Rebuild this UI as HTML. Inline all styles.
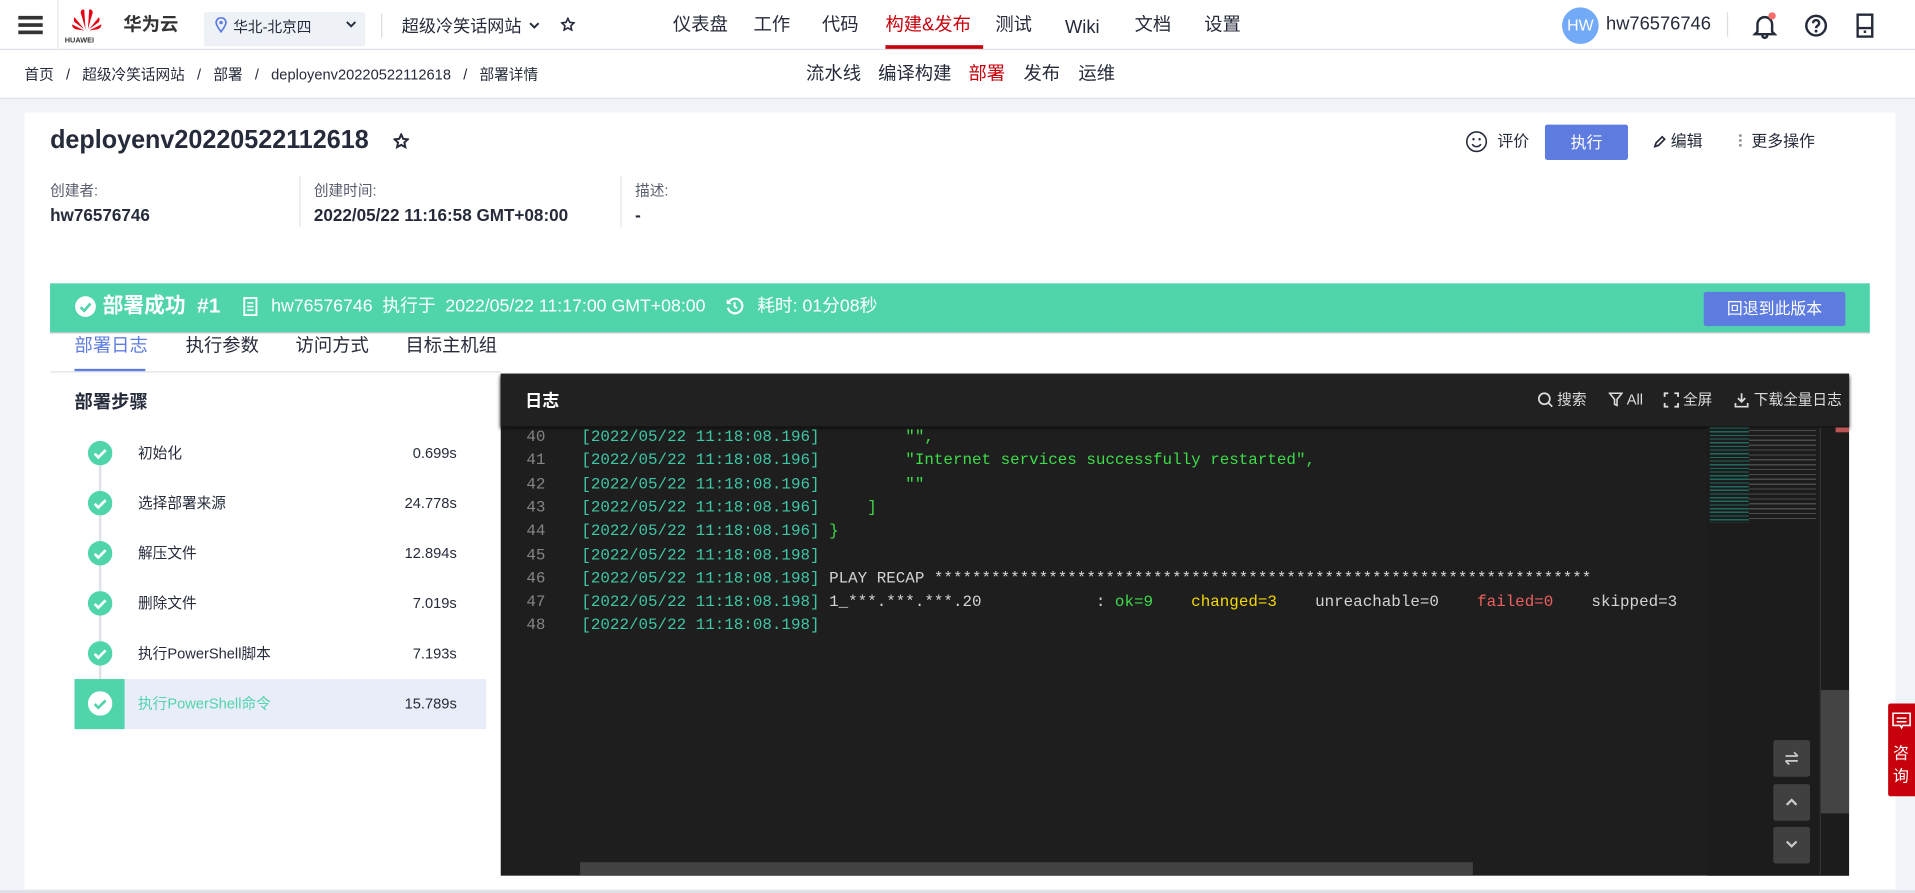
<!DOCTYPE html>
<html><head><meta charset="utf-8"><style>
html,body{margin:0;padding:0;width:1915px;height:893px;overflow:hidden;background:#f0f3f7}
#w{position:absolute;left:0;top:0;width:1568px;height:731px;transform:scale(1.22130);transform-origin:0 0;font-family:"Liberation Sans","Noto Sans CJK SC",sans-serif;color:#252b3a;font-size:13px}
.a{position:absolute;white-space:nowrap}
.n{line-height:20px;font-size:15px;top:11px}
.mono{font-family:"Liberation Mono","DejaVu Sans Mono",monospace;font-size:13px}
</style></head><body><div id="w">
<!-- header -->
<div class="a" style="left:0;top:0;width:1568px;height:40px;background:#fff;border-bottom:1px solid #dcdfe6"></div>
<div class="a" style="left:15px;top:13px;width:20px;height:3px;background:#333;box-shadow:0 6px 0 #333,0 12px 0 #333"></div>
<div class="a" style="left:47px;top:0;width:1px;height:40px;background:#e5e5e5"></div>
<svg class="a" style="left:57px;top:6px" width="28" height="22" viewBox="0 0 28 22"><g fill="#e60012"><path d="M13 18 L9 4 Q10 1 12 2 Z"/><path d="M15 18 L19 4 Q18 1 16 2 Z"/><path d="M12 18 L4 8 Q3 10 4 12 Z"/><path d="M16 18 L24 8 Q25 10 24 12 Z"/><path d="M12 19 L2 14 Q2 17 5 18 Z"/><path d="M16 19 L26 14 Q26 17 23 18 Z"/></g></svg>
<div class="a" style="left:53px;top:31px;font-size:6px;font-weight:bold;color:#333">HUAWEI</div>
<div class="a n" style="left:101px;font-weight:bold;color:#333">华为云</div>
<div class="a" style="left:167px;top:10px;width:132px;height:28px;background:#eef1f6;border-radius:2px"></div>
<svg class="a" style="left:176px;top:14px" width="10" height="13" viewBox="0 0 10 13"><path d="M5 12C2 8 1 6 1 4.5a4 4 0 018 0C9 6 8 8 5 12z" fill="none" stroke="#5e7ce0" stroke-width="1.4"/><circle cx="5" cy="4.5" r="1.4" fill="#5e7ce0"/></svg>
<div class="a" style="left:191px;top:14px;font-size:12px;line-height:16px">华北-北京四</div>
<svg class="a" style="left:283px;top:17px" width="9" height="6" viewBox="0 0 9 6"><path d="M1 1l3.5 3.5L8 1" fill="none" stroke="#252b3a" stroke-width="1.6"/></svg>
<div class="a" style="left:312px;top:11px;width:1px;height:20px;background:#ddd"></div>
<div class="a" style="left:329px;top:11px;font-size:14px;line-height:20px">超级冷笑话网站</div>
<svg class="a" style="left:433px;top:18px" width="9" height="6" viewBox="0 0 9 6"><path d="M1 1l3.5 3.5L8 1" fill="none" stroke="#252b3a" stroke-width="1.6"/></svg>
<svg class="a" style="left:459px;top:14px" width="12" height="12" viewBox="0 0 12 12"><path d="M6 1l1.5 3.3 3.5.4-2.6 2.4.7 3.5L6 8.9 2.9 10.6l.7-3.5L1 4.7l3.5-.4z" fill="none" stroke="#252b3a" stroke-width="1.3"/></svg>
<div class="a n" style="left:551px">仪表盘</div>
<div class="a n" style="left:617px">工作</div>
<div class="a n" style="left:673px">代码</div>
<div class="a n" style="left:725px;color:#c7000b">构建&amp;发布</div>
<div class="a" style="left:725px;top:37px;width:80px;height:3px;background:#c7000b"></div>
<div class="a n" style="left:815px">测试</div>
<div class="a n" style="left:872px;top:13px">Wiki</div>
<div class="a n" style="left:929px">文档</div>
<div class="a n" style="left:986px">设置</div>
<div class="a" style="left:1279px;top:6px;width:30px;height:30px;border-radius:50%;background:#73aaf7;color:#fff;font-size:13px;text-align:center;line-height:30px">HW</div>
<div class="a n" style="left:1315px;top:10px">hw76576746</div>
<div class="a" style="left:1414px;top:10px;width:1px;height:20px;background:#ddd"></div>
<svg class="a" style="left:1435px;top:10px" width="20" height="22" viewBox="0 0 20 22"><path d="M4 16V10a6 6 0 0112 0v6l2 2H2z M8 19a2 2 0 004 0" fill="none" stroke="#252b3a" stroke-width="2"/><circle cx="16" cy="3" r="3" fill="#f66f6a"/></svg>
<svg class="a" style="left:1477px;top:11px" width="20" height="20" viewBox="0 0 20 20"><circle cx="10" cy="10" r="8" fill="none" stroke="#252b3a" stroke-width="2"/><path d="M7.5 8a2.5 2.5 0 115 0c0 2-2.5 2-2.5 4" fill="none" stroke="#252b3a" stroke-width="2"/><circle cx="10" cy="14.5" r="1.2" fill="#252b3a"/></svg>
<svg class="a" style="left:1520px;top:11px" width="14" height="20" viewBox="0 0 14 20"><rect x="1" y="1" width="12" height="18" fill="none" stroke="#252b3a" stroke-width="2"/><path d="M1 12h12" stroke="#252b3a" stroke-width="2"/><rect x="6" y="14" width="2" height="2" fill="#252b3a"/></svg>
<!-- breadcrumb -->
<div class="a" style="left:0;top:41px;width:1568px;height:39px;background:#fff;border-bottom:1px solid #dcdfe6"></div>
<div class="a" style="left:20px;top:53px;font-size:12px;line-height:16px">首页 &nbsp; / &nbsp; 超级冷笑话网站 &nbsp; / &nbsp; 部署 &nbsp; / &nbsp; deployenv20220522112618 &nbsp; / &nbsp; 部署详情</div>
<div class="a n" style="left:660px;top:51px">流水线</div>
<div class="a n" style="left:719px;top:51px">编译构建</div>
<div class="a n" style="left:793px;top:51px;color:#c7000b">部署</div>
<div class="a n" style="left:838px;top:51px">发布</div>
<div class="a n" style="left:883px;top:51px">运维</div>
<!-- card -->
<div class="a" style="left:20px;top:92px;width:1532px;height:636px;background:#fff"></div>
<div class="a" style="left:0;top:729px;width:1568px;height:2px;background:#dcdfe6"></div>
<div class="a" style="left:41px;top:103px;font-size:21px;font-weight:bold;transform:scaleX(.98);transform-origin:0 0">deployenv20220522112618</div>
<svg class="a" style="left:322px;top:109px" width="13" height="13" viewBox="0 0 12 12"><path d="M6 1l1.5 3.3 3.5.4-2.6 2.4.7 3.5L6 8.9 2.9 10.6l.7-3.5L1 4.7l3.5-.4z" fill="none" stroke="#252b3a" stroke-width="1.5"/></svg>
<svg class="a" style="left:1200px;top:107px" width="18" height="18" viewBox="0 0 18 18"><circle cx="9" cy="9" r="8" fill="none" stroke="#252b3a" stroke-width="1.3"/><circle cx="6.5" cy="7" r="1" fill="#252b3a"/><circle cx="11.5" cy="7" r="1" fill="#252b3a"/><path d="M5.5 11a4 4 0 007 0" fill="none" stroke="#252b3a" stroke-width="1.3"/></svg>
<div class="a" style="left:1226px;top:108px;font-size:13px;line-height:16px">评价</div>
<div class="a" style="left:1265px;top:102px;width:68px;height:29px;background:#5e7ce0;border-radius:2px;color:#fff;font-size:13px;text-align:center;line-height:29px">执行</div>
<svg class="a" style="left:1353px;top:110px" width="12" height="12" viewBox="0 0 12 12"><path d="M2 10l1-3 5-5 2 2-5 5z" fill="none" stroke="#252b3a" stroke-width="1.4"/></svg>
<div class="a" style="left:1368px;top:108px;font-size:13px;line-height:16px">编辑</div>
<div class="a" style="left:1424px;top:110px;width:2px;height:2px;background:#888;box-shadow:0 4px 0 #888,0 8px 0 #888"></div>
<div class="a" style="left:1434px;top:108px;font-size:13px;line-height:16px">更多操作</div>
<div class="a" style="left:41px;top:147px;font-size:12px;color:#575d6c">创建者:</div>
<div class="a" style="left:41px;top:168px;font-size:14px;font-weight:bold">hw76576746</div>
<div class="a" style="left:245px;top:144px;width:1px;height:42px;background:#e5e5e5"></div>
<div class="a" style="left:257px;top:147px;font-size:12px;color:#575d6c">创建时间:</div>
<div class="a" style="left:257px;top:168px;font-size:14px;font-weight:bold">2022/05/22 11:16:58 GMT+08:00</div>
<div class="a" style="left:508px;top:144px;width:1px;height:42px;background:#e5e5e5"></div>
<div class="a" style="left:520px;top:147px;font-size:12px;color:#575d6c">描述:</div>
<div class="a" style="left:520px;top:168px;font-size:14px;font-weight:bold">-</div>
<!-- banner -->
<div class="a" style="left:41px;top:232px;width:1490px;height:40px;background:#50d4ab;border-bottom:1px solid #ccc"></div>
<svg class="a" style="left:61px;top:242px" width="18" height="18" viewBox="0 0 18 18"><circle cx="9" cy="9" r="8.5" fill="#fff"/><path d="M5 9.5l3 3 5-6" fill="none" stroke="#50d4ab" stroke-width="2.2"/></svg>
<div class="a" style="left:84px;top:241px;font-size:17px;font-weight:bold;color:#fff;line-height:20px">部署成功 &nbsp;#1</div>
<svg class="a" style="left:199px;top:243px" width="12" height="16" viewBox="0 0 12 16"><rect x="1" y="1" width="10" height="14" fill="none" stroke="#fff" stroke-width="1.5"/><path d="M3.5 5h5M3.5 8h5M3.5 11h5" stroke="#fff" stroke-width="1.3"/></svg>
<div class="a" style="left:222px;top:242px;font-size:14.5px;color:#fff;line-height:18px">hw76576746 &nbsp;执行于 &nbsp;2022/05/22 11:17:00 GMT+08:00</div>
<svg class="a" style="left:594px;top:243px" width="15" height="15" viewBox="0 0 15 15"><path d="M3 4a6 6 0 11-1 5" fill="none" stroke="#fff" stroke-width="1.8"/><path d="M1 2v4h4z" fill="#fff"/><path d="M7.5 4.5v3.5l2 1.5" fill="none" stroke="#fff" stroke-width="1.6"/></svg>
<div class="a" style="left:620px;top:242px;font-size:14.5px;color:#fff;line-height:18px">耗时: 01分08秒</div>
<div class="a" style="left:1395px;top:239px;width:116px;height:28px;background:#5e7ce0;border-radius:2px;color:#fff;font-size:13px;text-align:center;line-height:28px">回退到此版本</div>
<!-- tabs -->
<div class="a" style="left:61px;top:274px;font-size:15px;color:#5e7ce0;line-height:20px">部署日志</div>
<div class="a" style="left:61px;top:302px;width:58px;height:2px;background:#5e7ce0"></div>
<div class="a" style="left:152px;top:274px;font-size:15px;line-height:20px">执行参数</div>
<div class="a" style="left:242px;top:274px;font-size:15px;line-height:20px">访问方式</div>
<div class="a" style="left:332px;top:274px;font-size:15px;line-height:20px">目标主机组</div>
<div class="a" style="left:41px;top:304px;width:369px;height:1px;background:#dfe1e6"></div>
<!-- steps -->
<div class="a" style="left:61px;top:320px;font-size:15px;font-weight:bold;line-height:20px">部署步骤</div>
<div class="a" style="left:81px;top:371px;width:2px;height:185px;background:#dfe1e6"></div>
<div class="a" style="left:61px;top:556px;width:337px;height:41px;background:#e9edfa"></div>
<div class="a" style="left:61px;top:556px;width:41px;height:41px;background:#50d4ab"></div>
<div id="steps"></div>
<!-- log panel -->
<div class="a" style="left:410px;top:306px;width:1104px;height:411px;background:#1e1e1e"></div>
<div class="a" style="left:410px;top:306px;width:1104px;height:43px;background:#212121;box-shadow:0 2px 3px #111"></div>
<div class="a" style="left:430px;top:319px;font-size:14px;font-weight:bold;color:#fff;line-height:18px">日志</div>
<svg class="a" style="left:1259px;top:321px" width="13" height="13" viewBox="0 0 13 13"><circle cx="5.5" cy="5.5" r="4.5" fill="none" stroke="#ddd" stroke-width="1.4"/><path d="M9 9l3 3" stroke="#ddd" stroke-width="1.4"/></svg>
<div class="a" style="left:1275px;top:320px;font-size:12px;color:#ddd;line-height:15px">搜索</div>
<svg class="a" style="left:1317px;top:321px" width="12" height="12" viewBox="0 0 12 12"><path d="M1 1h10L7 6v5L5 10V6z" fill="none" stroke="#ddd" stroke-width="1.3"/></svg>
<div class="a" style="left:1332px;top:320px;font-size:12px;color:#ddd;line-height:15px">All</div>
<svg class="a" style="left:1362px;top:321px" width="13" height="13" viewBox="0 0 13 13"><path d="M1 4V1h3M9 1h3v3M12 9v3H9M4 12H1V9" fill="none" stroke="#ddd" stroke-width="1.5"/></svg>
<div class="a" style="left:1378px;top:320px;font-size:12px;color:#ddd;line-height:15px">全屏</div>
<svg class="a" style="left:1420px;top:321px" width="12" height="13" viewBox="0 0 12 13"><path d="M6 1v7M3 5l3 3 3-3M1 9v3h10V9" fill="none" stroke="#ddd" stroke-width="1.4"/></svg>
<div class="a" style="left:1436px;top:320px;font-size:12px;color:#ddd;line-height:15px">下载全量日志</div>
<div class="a" style="left:1398px;top:350px;width:116px;height:367px;background:#1c1c1c"></div>
<div class="a" style="left:1400px;top:350px;width:32px;height:78px;background:repeating-linear-gradient(#1f6a5f 0 1px,#1c1c1c 1px 3px)"></div>
<div class="a" style="left:1432px;top:352px;width:55px;height:74px;background:repeating-linear-gradient(#555 0 1px,#1c1c1c 1px 4px);opacity:.8"></div>
<div class="a" style="left:1490px;top:350px;width:1px;height:367px;background:#333"></div>
<div class="a" style="left:1491px;top:565px;width:23px;height:101px;background:#444"></div>
<div class="a" style="left:1503px;top:350px;width:11px;height:4px;background:#b55"></div>
<div class="a" style="left:475px;top:706px;width:731px;height:11px;background:#424242"></div>
<div class="a" style="left:1452px;top:606px;width:30px;height:30px;background:#404040;border-radius:2px"></div>
<svg class="a" style="left:1461px;top:615px" width="12" height="12" viewBox="0 0 12 12"><path d="M1 4h10M8 1l3 3M11 8H1M4 11L1 8" fill="none" stroke="#ccc" stroke-width="1.4"/></svg>
<div class="a" style="left:1452px;top:642px;width:30px;height:30px;background:#404040;border-radius:2px"></div>
<svg class="a" style="left:1462px;top:653px" width="10" height="7" viewBox="0 0 10 7"><path d="M1 6l4-4 4 4" fill="none" stroke="#ccc" stroke-width="1.8"/></svg>
<div class="a" style="left:1452px;top:677px;width:30px;height:30px;background:#404040;border-radius:2px"></div>
<svg class="a" style="left:1462px;top:688px" width="10" height="7" viewBox="0 0 10 7"><path d="M1 1l4 4 4-4" fill="none" stroke="#ccc" stroke-width="1.8"/></svg>
<div id="log" class="mono"></div>
<!-- consult -->
<div class="a" style="left:1546px;top:576px;width:22px;height:76px;background:#c7000b;border-radius:2px 0 0 2px"></div>
<svg class="a" style="left:1549px;top:583px" width="16" height="15" viewBox="0 0 16 15"><path d="M1 1h14v10H9l-1 2-1-2H1z" fill="none" stroke="#fff" stroke-width="1.3"/><path d="M4 5h8M4 8h8" stroke="#fff" stroke-width="1.2"/></svg>
<div class="a" style="left:1550px;top:607px;font-size:13px;color:#fff;line-height:19px">咨<br>询</div>
</div>
<script>
var s=[["初始化","0.699s"],["选择部署来源","24.778s"],["解压文件","12.894s"],["删除文件","7.019s"],["执行PowerShell脚本","7.193s"],["执行PowerShell命令","15.789s"]],h="";
s.forEach(function(x,i){var y=371+41*i,act=i==5;
h+='<svg class="a" style="left:72px;top:'+(y-10)+'px" width="20" height="20" viewBox="0 0 20 20"><circle cx="10" cy="10" r="10" fill="'+(act?'#fff':'#50d4ab')+'"/><path d="M5.5 10.5l3 3 6-6" fill="none" stroke="'+(act?'#50d4ab':'#fff')+'" stroke-width="2.2"/></svg>';
h+='<div class="a" style="left:113px;top:'+(y-8)+'px;font-size:12px;line-height:16px;color:'+(act?'#50d4ab':'#252b3a')+'">'+x[0]+'</div>';
h+='<div class="a" style="right:'+(1568-374)+'px;top:'+(y-8)+'px;font-size:12px;line-height:16px">'+x[1]+'</div>';});
document.getElementById('steps').innerHTML=h;
var G='#3ddc4a',T='#3ec7a6',W='#d4d4d4';
function sp(c,t){return '<span style="color:'+c+'">'+t+'</span>'}
var L=[["196",sp(G,'        "",')],["196",sp(G,'        "Internet services successfully restarted",')],["196",sp(G,'        ""')],["196",sp(G,'    ]')],["196",sp(G,'}')],["198",""],["198",sp(W,'PLAY RECAP *********************************************************************')],["198",sp(W,'1_***.***.***.20            : ')+sp(G,'ok=9')+'    '+sp('#f5d800','changed=3')+'    '+sp(W,'unreachable=0')+'    '+sp('#f06060','failed=0')+'    '+sp(W,'skipped=3')],["198",""]];
var o="";L.forEach(function(l,i){var y=350+19.3*i;
o+='<div class="a mono" style="left:431px;top:'+y+'px;color:#858585">'+(40+i)+'</div>';
o+='<div class="a mono" style="left:476px;top:'+y+'px;width:914px;overflow:hidden;white-space:pre">'+sp(T,'[2022/05/22 11:18:08.'+l[0]+']')+' '+l[1]+'</div>';});
document.getElementById('log').innerHTML=o;
</script>
</body></html>
